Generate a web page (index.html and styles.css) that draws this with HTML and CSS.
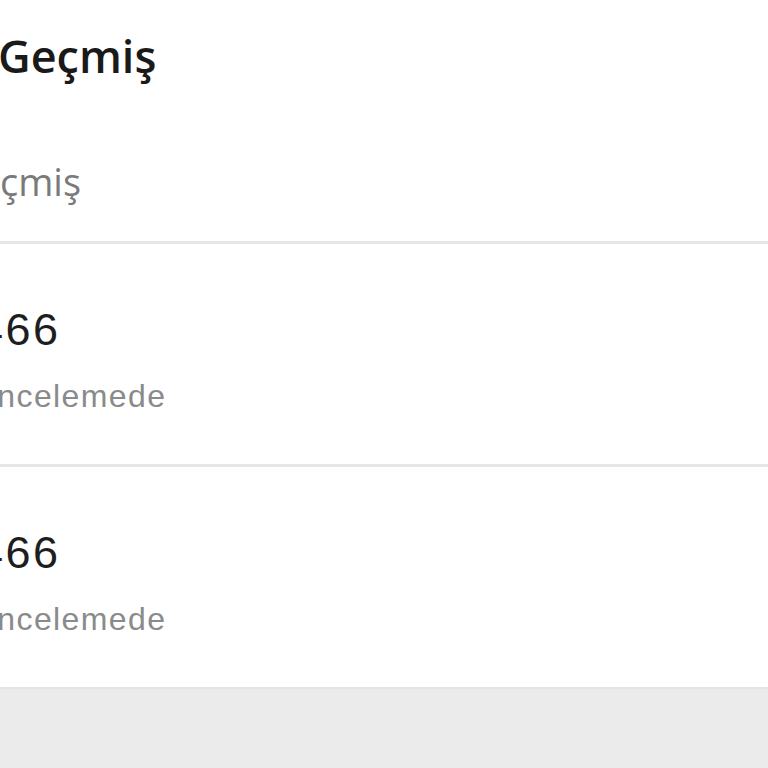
FILE: index.html
```html
<!DOCTYPE html>
<html lang="tr">
<head>
<meta charset="utf-8">
<link rel="stylesheet" href="styles.css">
</head>
<body>
<div class="screen">
  <header class="head">
    <h1 class="title">Geçmiş</h1>
    <div class="subtitle"><span class="clip-sub">Geçmiş</span></div>
  </header>
  <ul class="list">
    <li class="item">
      <div class="num"><span class="clip-num">466</span></div>
      <div class="status"><span class="clip-status">İncelemede</span></div>
    </li>
    <li class="item">
      <div class="num"><span class="clip-num">466</span></div>
      <div class="status"><span class="clip-status">İncelemede</span></div>
    </li>
  </ul>
  <div class="footer"></div>
</div>
</body>
</html>
```
FILE: styles.css
```css
html, body {
  margin: 0;
  padding: 0;
  background: #ececec;
  overflow: hidden;
}
.screen {
  width: 768px;
  height: 768px;
  display: flex;
  flex-direction: column;
  overflow: hidden;
}
.head {
  background: #fff;
  height: 241px;
  display: flex;
  flex-direction: column;
}
.title {
  margin: 0;
  padding-top: 28px;
  font-family: "Open Sans", sans-serif;
  font-weight: 600;
  font-size: 45px;
  line-height: 56px;
  color: #1a1a1a;
  margin-left: -2px;
}
.subtitle {
  margin-top: 72px;
  font-family: "Open Sans", sans-serif;
  font-size: 38px;
  line-height: 50px;
  color: #7a7a7a;
  white-space: nowrap;
}
.clip-sub {
  display: inline-block;
  margin-left: -49px;
}
.list {
  list-style: none;
  margin: 0;
  padding: 0;
  background: #fff;
}
.item {
  border-top: 3px solid #e6e6e6;
  height: 223px;
  box-sizing: border-box;
  padding-top: 60px;
  white-space: nowrap;
}
.num {
  font-family: "Liberation Sans", Arial, sans-serif;
  font-size: 45px;
  line-height: 52px;
  letter-spacing: 2.5px;
  color: #1e1e1e;
}
.clip-num {
  display: inline-block;
  margin-left: -22px;
}
.status {
  margin-top: 21px;
  font-family: "Liberation Sans", Arial, sans-serif;
  font-size: 32px;
  line-height: 38px;
  letter-spacing: 1.4px;
  color: #8a8a8a;
}
.clip-status {
  display: inline-block;
  margin-left: -13px;
}
.footer {
  flex: 1;
  background: #ebebeb;
  border-top: 2px solid #e4e4e4;
}
```
